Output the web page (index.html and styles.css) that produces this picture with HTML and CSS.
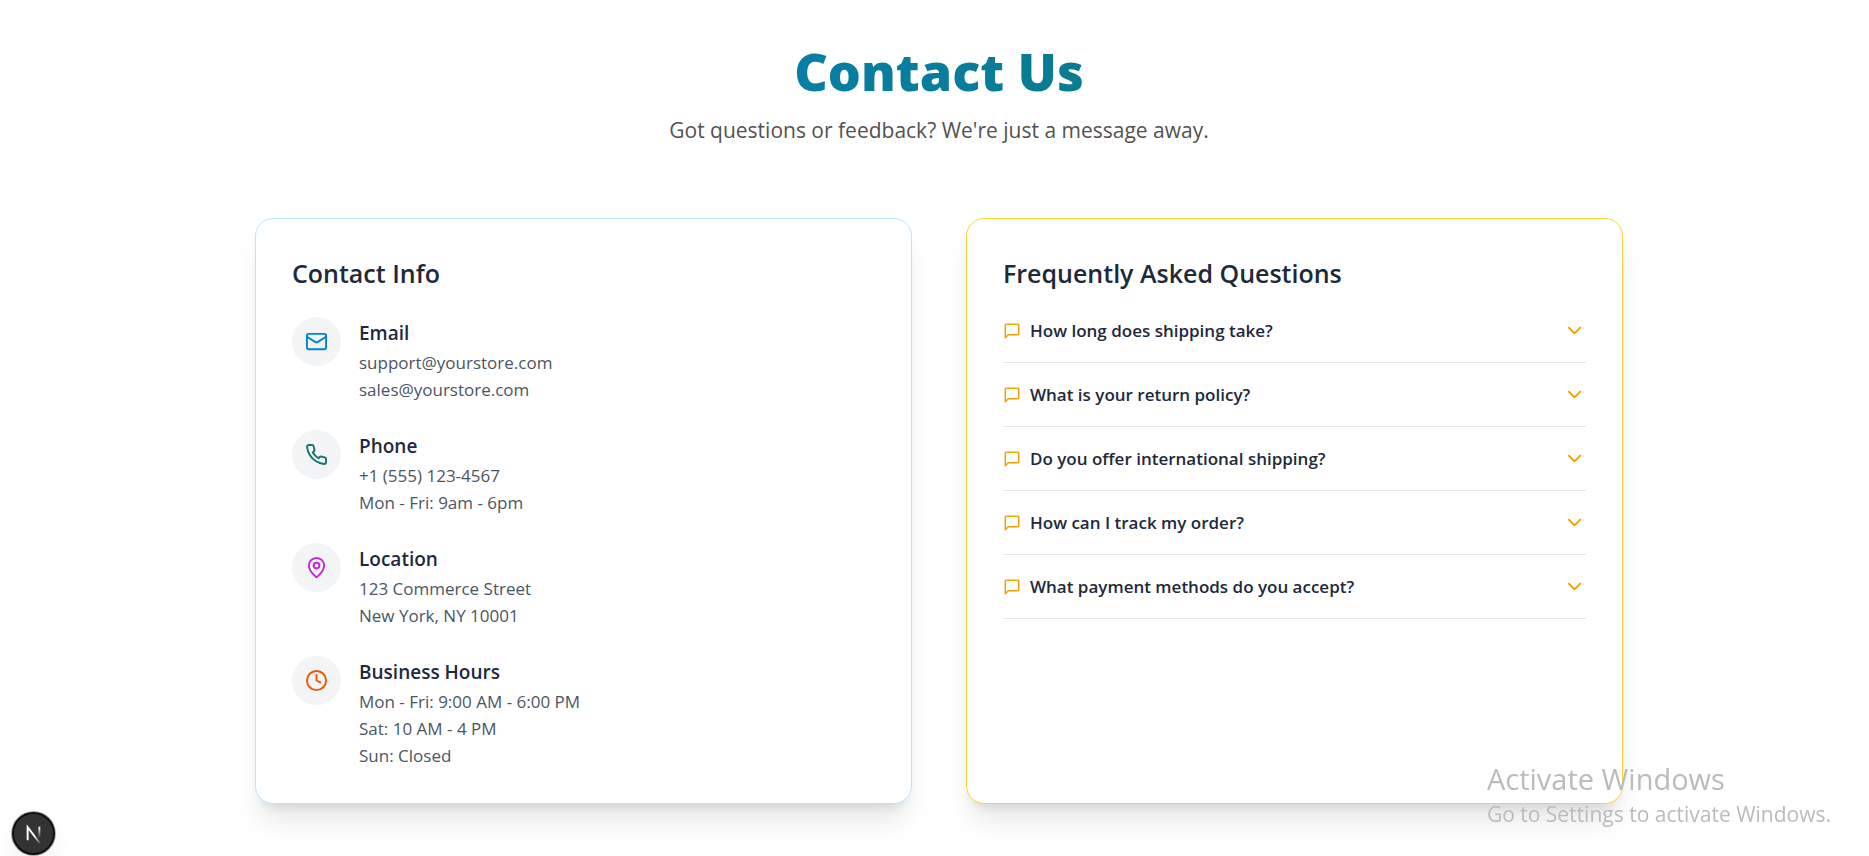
FILE: index.html
```html
<!DOCTYPE html>
<html lang="en">
<head>
<meta charset="utf-8">
<meta name="viewport" content="width=device-width, initial-scale=1">
<title>Contact Us</title>
<link rel="stylesheet" href="styles.css">
</head>
<body>
<main class="page">
  <header class="hero">
    <h1 class="hero-title">Contact Us</h1>
    <p class="hero-text">Got questions or feedback? We're just a message away.</p>
  </header>
  <div class="cards">
    <section class="card card-info">
      <h2 class="card-title">Contact Info</h2>
      <ul class="info-list">
        <li class="info-item">
          <span class="info-icon email"><svg class="icon" viewBox="0 0 24 24"><rect x="2" y="4" width="20" height="16" rx="2"/><path d="m22 7-8.97 5.7a1.94 1.94 0 0 1-2.06 0L2 7"/></svg></span>
          <div>
            <h3 class="info-name">Email</h3>
            <p class="info-line">support@yourstore.com</p>
            <p class="info-line">sales@yourstore.com</p>
          </div>
        </li>
        <li class="info-item">
          <span class="info-icon phone"><svg class="icon" viewBox="0 0 24 24"><path d="M22 16.92v3a2 2 0 0 1-2.18 2 19.79 19.79 0 0 1-8.63-3.07 19.5 19.5 0 0 1-6-6 19.79 19.79 0 0 1-3.07-8.67A2 2 0 0 1 4.11 2h3a2 2 0 0 1 2 1.72 12.84 12.84 0 0 0 .7 2.81 2 2 0 0 1-.45 2.11L8.09 9.91a16 16 0 0 0 6 6l1.27-1.27a2 2 0 0 1 2.11-.45 12.84 12.84 0 0 0 2.81.7A2 2 0 0 1 22 16.92z"/></svg></span>
          <div>
            <h3 class="info-name">Phone</h3>
            <p class="info-line">+1 (555) 123-4567</p>
            <p class="info-line">Mon - Fri: 9am - 6pm</p>
          </div>
        </li>
        <li class="info-item">
          <span class="info-icon location"><svg class="icon" viewBox="0 0 24 24"><path d="M20 10c0 4.993-5.539 10.193-7.399 11.799a1 1 0 0 1-1.202 0C9.539 20.193 4 14.993 4 10a8 8 0 0 1 16 0"/><circle cx="12" cy="10" r="3"/></svg></span>
          <div>
            <h3 class="info-name">Location</h3>
            <p class="info-line">123 Commerce Street</p>
            <p class="info-line">New York, NY 10001</p>
          </div>
        </li>
        <li class="info-item">
          <span class="info-icon hours"><svg class="icon" viewBox="0 0 24 24"><circle cx="12" cy="12" r="10"/><path d="M12 6v6l4 2"/></svg></span>
          <div>
            <h3 class="info-name">Business Hours</h3>
            <p class="info-line">Mon - Fri: 9:00 AM - 6:00 PM</p>
            <p class="info-line">Sat: 10 AM - 4 PM</p>
            <p class="info-line">Sun: Closed</p>
          </div>
        </li>
      </ul>
    </section>
    <section class="card card-faq">
      <h2 class="card-title">Frequently Asked Questions</h2>
      <ul class="faq-list">
        <li class="faq-item"><button class="faq-button" type="button" aria-expanded="false"><svg class="icon icon-small" viewBox="0 0 24 24"><path d="M21 15a2 2 0 0 1-2 2H7l-4 4V5a2 2 0 0 1 2-2h14a2 2 0 0 1 2 2z"/></svg><span class="faq-question">How long does shipping take?</span><svg class="icon" viewBox="0 0 24 24"><path d="m6 9 6 6 6-6"/></svg></button></li>
        <li class="faq-item"><button class="faq-button" type="button" aria-expanded="false"><svg class="icon icon-small" viewBox="0 0 24 24"><path d="M21 15a2 2 0 0 1-2 2H7l-4 4V5a2 2 0 0 1 2-2h14a2 2 0 0 1 2 2z"/></svg><span class="faq-question">What is your return policy?</span><svg class="icon" viewBox="0 0 24 24"><path d="m6 9 6 6 6-6"/></svg></button></li>
        <li class="faq-item"><button class="faq-button" type="button" aria-expanded="false"><svg class="icon icon-small" viewBox="0 0 24 24"><path d="M21 15a2 2 0 0 1-2 2H7l-4 4V5a2 2 0 0 1 2-2h14a2 2 0 0 1 2 2z"/></svg><span class="faq-question">Do you offer international shipping?</span><svg class="icon" viewBox="0 0 24 24"><path d="m6 9 6 6 6-6"/></svg></button></li>
        <li class="faq-item"><button class="faq-button" type="button" aria-expanded="false"><svg class="icon icon-small" viewBox="0 0 24 24"><path d="M21 15a2 2 0 0 1-2 2H7l-4 4V5a2 2 0 0 1 2-2h14a2 2 0 0 1 2 2z"/></svg><span class="faq-question">How can I track my order?</span><svg class="icon" viewBox="0 0 24 24"><path d="m6 9 6 6 6-6"/></svg></button></li>
        <li class="faq-item"><button class="faq-button" type="button" aria-expanded="false"><svg class="icon icon-small" viewBox="0 0 24 24"><path d="M21 15a2 2 0 0 1-2 2H7l-4 4V5a2 2 0 0 1 2-2h14a2 2 0 0 1 2 2z"/></svg><span class="faq-question">What payment methods do you accept?</span><svg class="icon" viewBox="0 0 24 24"><path d="m6 9 6 6 6-6"/></svg></button></li>
      </ul>
    </section>
  </div>
</main>
<button class="dev-badge" type="button" aria-label="Open developer tools">
  <svg class="dev-logo" viewBox="0 0 40 40" fill="none">
    <defs>
      <linearGradient id="diagonal" gradientUnits="userSpaceOnUse" x1="21" y1="22" x2="28" y2="31"><stop stop-color="#fff"/><stop offset="1" stop-color="#fff" stop-opacity="0"/></linearGradient>
      <linearGradient id="stem" gradientUnits="userSpaceOnUse" x1="26" y1="13" x2="26" y2="25"><stop stop-color="#fff"/><stop offset="1" stop-color="#fff" stop-opacity="0"/></linearGradient>
    </defs>
    <path d="M14 27V13.500L26.500 30" stroke="url(#diagonal)" stroke-width="2"/>
    <path d="M26 13v13" stroke="url(#stem)" stroke-width="2"/>
  </svg>
</button>
<aside class="watermark">
  <p class="watermark-title">Activate Windows</p>
  <p class="watermark-text">Go to Settings to activate Windows.</p>
</aside>
</body>
</html>
```

FILE: styles.css
```css
*, *::before, *::after { box-sizing: border-box; }
body, h1, h2, h3, p, ul { margin: 0; padding: 0; }
ul { list-style: none; }
body {
  padding-left: 9px;
  background: #fff;
  color: #1e293b;
  font-family: "Segoe UI", "Open Sans", "Noto Sans", sans-serif;
  font-size: 17px;
  line-height: 27px;
}
.page {
  max-width: 1440px;
  margin: 0 auto;
  padding: 44px 36px 36px;
}
.hero { text-align: center; margin-bottom: 72px; }
.hero-title {
  font-size: 52px;
  font-weight: 800;
  line-height: 54px;
  margin-bottom: 16px;
  color: transparent;
  background: linear-gradient(to right, #0284c7, #0f766e);
  background-clip: text;
  -webkit-background-clip: text;
}
.hero-text { font-size: 21px; line-height: 32px; color: #525252; }
.cards {
  display: grid;
  grid-template-columns: repeat(auto-fit, minmax(min(100%, 420px), 1fr));
  gap: 54px;
}
.card {
  padding: 36px 36px 34px;
  background: #fff;
  border: 1px solid;
  border-radius: 18px;
  box-shadow: 0 22px 28px -6px rgba(0, 0, 0, 0.1), 0 9px 11px -7px rgba(0, 0, 0, 0.1);
}
.card-info { border-color: #b8e6fe; }
.card-faq { border-color: #ffd230; }
.card-title {
  font-size: 25px;
  font-weight: 600;
  line-height: 36px;
  margin-bottom: 26px;
}
.icon {
  flex: none;
  display: block;
  width: 23px;
  height: 23px;
  fill: none;
  stroke: currentColor;
  stroke-width: 2;
  stroke-linecap: round;
  stroke-linejoin: round;
}
.icon-small { width: 18px; height: 18px; }
.info-list { display: flex; flex-direction: column; gap: 27px; }
.info-item { display: flex; align-items: flex-start; gap: 18px; }
.info-icon { padding: 13px; border-radius: 50%; background: #f3f4f6; }
.email { color: #0284c7; }
.phone { color: #0f766e; }
.location { color: #c026d3; }
.hours { color: #ea580c; }
.info-name { font-size: 19px; font-weight: 600; line-height: 32px; }
.info-line { color: #4b5563; }
.faq-list { display: flex; flex-direction: column; gap: 18px; }
.faq-item { padding-bottom: 18px; border-bottom: 1px solid #e5e7eb; }
.faq-button {
  display: flex;
  align-items: center;
  gap: 9px;
  width: 100%;
  padding: 0;
  border: 0;
  background: none;
  color: #f59e0b;
  font: inherit;
  font-weight: 600;
  text-align: left;
  cursor: pointer;
}
.faq-question { flex: 1; color: #1e293b; }
.dev-badge {
  position: fixed;
  left: 12px;
  bottom: 1px;
  width: 43px;
  height: 43px;
  padding: 0;
  border: 2px solid #111;
  border-radius: 50%;
  background: #333;
  box-shadow: 0 0 0 1px #aaa, 0 12px 24px rgba(0, 0, 0, 0.06);
}
.dev-logo { display: block; width: 39px; height: 39px; }
.watermark {
  position: fixed;
  right: 38px;
  bottom: 27px;
  color: #bbb;
  pointer-events: none;
}
.watermark-title { font-size: 29px; line-height: 40px; }
.watermark-text { font-size: 21px; line-height: 30px; }
```
